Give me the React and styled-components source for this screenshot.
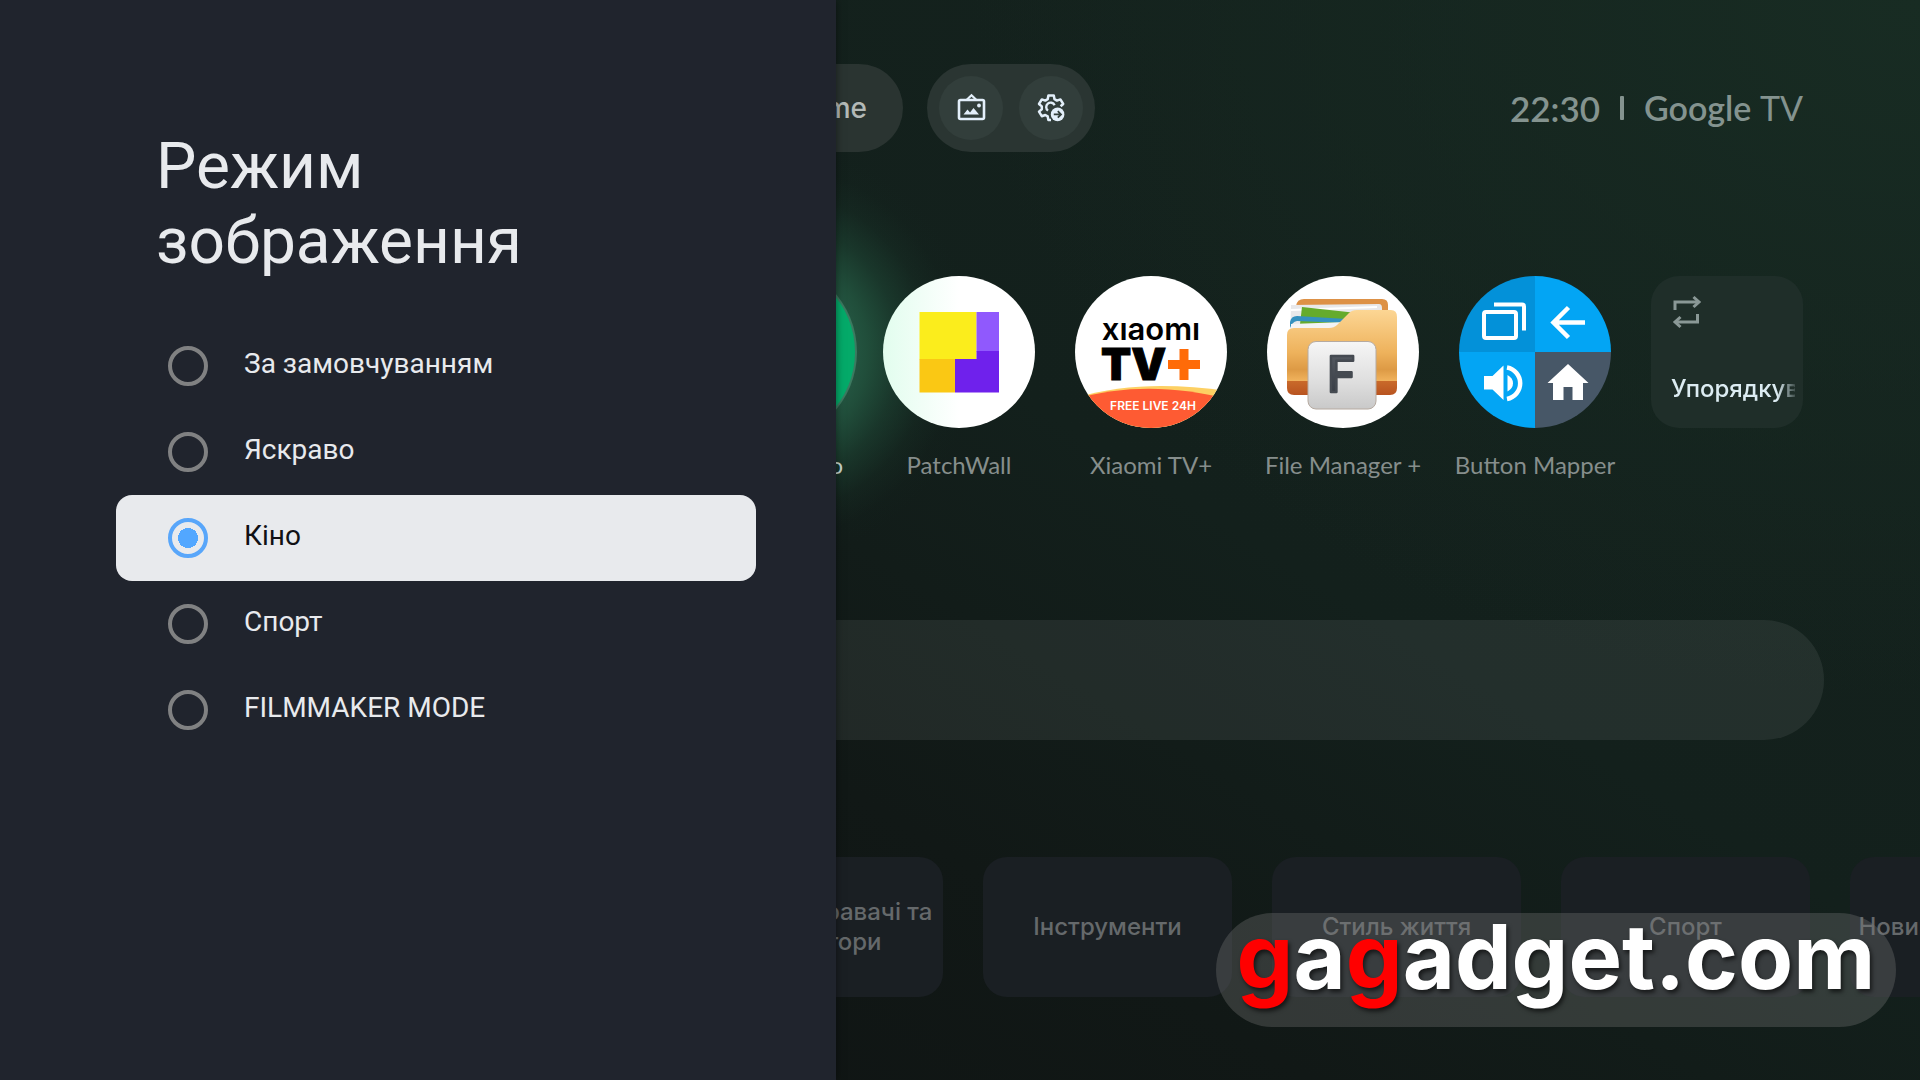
import React, { useState } from "react";
import styled, { createGlobalStyle, css } from "styled-components";

const GlobalStyle = createGlobalStyle`
  *, *::before, *::after { box-sizing: border-box; }
  body { margin: 0; background: #111716; }
`;

const uiFont = `"Inter", "Liberation Sans", sans-serif`;
const labelFont = `"Lato", "Liberation Sans", sans-serif`;

const Screen = styled.div`
  position: relative;
  min-height: 100vh;
  display: grid;
  overflow: hidden;
  font-family: ${uiFont};
  background:
    radial-gradient(ellipse 950px 700px at 100% 0%, #182c23 0%, rgba(23, 42, 34, 0.7) 40%, rgba(20, 33, 28, 0) 100%),
    linear-gradient(212deg, #15231e 0%, #13201c 42%, #111816 64%, #0e1111 100%);
`;

/* ---------- Settings side panel ---------- */

const Panel = styled.aside`
  position: absolute;
  z-index: 2;
  top: 0;
  bottom: 0;
  left: 0;
  width: 836px;
  padding: 129px 80px 0 116px;
  background: #20242d;
  box-shadow: 0 0 8px rgba(0, 0, 0, 0.5);
  font-family: "Roboto", "Liberation Sans", sans-serif;
`;

const Title = styled.h1`
  margin: 0 0 44px;
  padding-left: 40px;
  max-width: 480px;
  font-size: 64px;
  line-height: 75px;
  font-weight: 400;
  color: #e8eaed;
`;

const Options = styled.fieldset`
  margin: 0;
  padding: 0;
  border: 0;
  display: flex;
  flex-direction: column;
`;

const Option = styled.label`
  display: flex;
  align-items: center;
  gap: 36px;
  height: 86px;
  padding: 0 52px;
  border-radius: 16px;
  color: #e8eaed;
  cursor: pointer;
  ${(p) => p.$active && css`
    background: #e8eaed;
    color: #101114;
  `}
`;

const Radio = styled.input`
  appearance: none;
  flex: none;
  width: 40px;
  height: 40px;
  margin: 0;
  border: 4px solid #808182;
  border-radius: 50%;
  outline: none;
  &:checked {
    border-color: #58a6fa;
    background: radial-gradient(circle, #52a7ff 0 10px, transparent 10px);
  }
`;

const OptionText = styled.span`
  padding-bottom: 5px;
  font-size: 28px;
  line-height: 33px;
`;

/* ---------- Home screen ---------- */

const Home = styled.main`
  display: flex;
  flex-direction: column;
  min-width: 0;
  padding: 64px 0 83px;
`;

const Header = styled.header`
  display: flex;
  align-items: center;
  gap: 24px;
  padding: 0 117px 0 96px;
`;

const NavPill = styled.nav`
  display: flex;
  align-items: center;
  justify-content: flex-end;
  width: 807px;
  height: 88px;
  padding: 0 36px;
  border-radius: 44px;
  background: #2a3431;
`;

const NavLink = styled.a`
  color: #b3b9b7;
  font-family: ${uiFont};
  font-size: 28px;
  line-height: 36px;
  font-weight: 500;
  text-decoration: none;
`;

const ToolPill = styled.div`
  display: flex;
  gap: 16px;
  padding: 12px;
  border-radius: 44px;
  background: #2a3532;
`;

const RoundButton = styled.button`
  display: grid;
  place-items: center;
  width: 64px;
  height: 64px;
  padding: 0;
  border: 0;
  border-radius: 50%;
  background: #323e3b;
  color: #e3effa;
`;

const Status = styled.div`
  display: flex;
  align-items: center;
  gap: 20px;
  margin-left: auto;
  color: #84938f;
  font-family: ${labelFont};
`;

const Clock = styled.time`
  font-size: 35px;
  line-height: 44px;
  font-weight: 600;
`;

const Divider = styled.span`
  width: 4px;
  height: 24px;
  border-radius: 1px;
  background: #84938f;
`;

const Brand = styled.span`
  font-size: 34px;
  line-height: 44px;
  font-weight: 600;
`;

const BrandLight = styled.span`
  font-weight: 400;
`;

const Apps = styled.ul`
  list-style: none;
  display: flex;
  justify-content: flex-end;
  gap: 40px;
  margin: 124px 0 0;
  padding: 0 117px;
`;

const AppItem = styled.li`
  position: relative;
  flex: none;
  width: 152px;
`;

const AppLink = styled.a`
  position: relative;
  display: flex;
  flex-direction: column;
  align-items: center;
  gap: 23px;
  color: ${(p) => (p.$focused ? "#c8d6d0" : "#868e8c")};
  text-decoration: none;
  svg { display: block; }
`;

const AppName = styled.span`
  font-family: ${labelFont};
  font-size: 24px;
  line-height: 28px;
  white-space: nowrap;
`;

const FocusName = styled(AppName)`
  align-self: flex-end;
`;

const FocusGlow = styled.span`
  position: absolute;
  top: -134px;
  left: -134px;
  width: 420px;
  height: 420px;
  border-radius: 50%;
  background: radial-gradient(circle closest-side, #265d46 0%, #255944 38%, rgba(35, 86, 64, 0.85) 48%, rgba(32, 78, 58, 0.5) 63%, rgba(28, 66, 49, 0.2) 78%, rgba(20, 50, 38, 0.05) 90%, rgba(20, 50, 38, 0) 100%);
  pointer-events: none;
`;

const FocusDisc = styled.span`
  width: 152px;
  height: 152px;
  border-radius: 50%;
  background: #04aa69;
  box-shadow: 0 0 0 12px #04aa69, 0 0 0 14px #3c7a60;
`;

const ReorderCard = styled.button`
  flex: none;
  display: flex;
  flex-direction: column;
  justify-content: space-between;
  align-items: flex-start;
  width: 152px;
  height: 152px;
  padding: 18px 8px 23px 20px;
  border: 0;
  border-radius: 28px;
  background: #1f2e29;
  color: #dcecf2;
  overflow: hidden;
`;

const ReorderText = styled.span`
  width: 124px;
  overflow: hidden;
  font-family: ${uiFont};
  font-size: 24px;
  line-height: 32px;
  font-weight: 500;
  text-align: left;
  white-space: nowrap;
  mask-image: linear-gradient(90deg, #000 106px, transparent 128px);
`;

const Banner = styled.div`
  height: 120px;
  margin: 141px 96px 0;
  border-radius: 60px;
  background: rgba(255, 255, 255, 0.07);
`;

const Categories = styled.div`
  display: grid;
  grid-auto-flow: column;
  grid-auto-columns: 249px;
  grid-template-rows: 140px;
  gap: 40px;
  margin-top: 117px;
  padding-left: 116px;
  overflow: hidden;
`;

const Category = styled.button`
  grid-row: 1;
  grid-column: ${(p) => p.$column};
  padding: 0;
  border: 0;
  border-radius: 24px;
  background: #1a1f23;
  color: #65696b;
  font-family: ${uiFont};
  font-size: 24px;
  line-height: 30px;
  font-weight: 500;
`;

const Watermark = styled.div`
  position: absolute;
  z-index: 3;
  right: 24px;
  bottom: 53px;
  width: 680px;
  height: 114px;
  display: flex;
  justify-content: center;
  border-radius: 57px;
  background: rgba(124, 124, 124, 0.32);
  color: #fff;
  font-family: ${uiFont};
  font-size: 90px;
  line-height: 88px;
  font-weight: 700;
  text-shadow: 2px 3px 4px rgba(0, 0, 0, 0.6);
`;

const Red = styled.span`
  color: #ff0000;
`;

/* ---------- Icons ---------- */

const PictureIcon = () => (
  <svg width="32" height="32" viewBox="0 0 32 32" fill="none" stroke="currentColor" aria-hidden="true">
    <rect x="4" y="8" width="25" height="19" rx="1.5" strokeWidth="2.6" />
    <path d="M11.5 8 L16.5 3.2 L21.5 8" strokeWidth="2.2" />
    <circle cx="24" cy="13.5" r="1.9" fill="currentColor" stroke="none" />
    <path d="M8.500 22.500 L12.500 17.500 L15 20.500 L18.500 16 L24 22.500 Z" fill="currentColor" stroke="none" />
  </svg>
);

const SettingsIcon = () => (
  <svg width="32" height="32" viewBox="0 0 32 32" fill="none" aria-hidden="true">
    <path
      d="M16 28 L13.4 28 L12.7 24.4 L10.3 23 L6.8 24.2 L4 19.6 L6.8 17.2 L6.8 14.4 L4 12 L6.8 7.4 L10.3 8.6 L12.7 7.2 L13.4 3.6 L18.8 3.6 L19.5 7.2 L21.9 8.6 L25.4 7.4 L28.2 12 L25.6 14.3"
      stroke="currentColor" strokeWidth="2.5" strokeLinejoin="round" />
    <path d="M13 18.6 A4.4 4.4 0 1 1 19.6 13.2" stroke="currentColor" strokeWidth="2.4" />
    <circle cx="22.6" cy="22.4" r="6.8" fill="currentColor" />
    <path d="M18.8 22.4 H25.6 M22.8 19.2 L26 22.4 L22.8 25.6" stroke="#323e3b" strokeWidth="1.8" />
  </svg>
);

const ReorderIcon = () => (
  <svg width="32" height="36" viewBox="0 0 32 36" fill="none" stroke="#8a9896" strokeWidth="3" aria-hidden="true">
    <path d="M4 16 V8 H27" />
    <path d="M22.5 3 L28 8 L22.5 13" />
    <path d="M26.5 20 V28 H4" />
    <path d="M9.5 23 L4 28 L9.5 33" />
  </svg>
);

const PatchWallIcon = () => (
  <svg width="152" height="152" viewBox="0 0 152 152" aria-hidden="true">
    <defs>
      <linearGradient id="pw-tint" x1="0" y1="0" x2="1" y2="0">
        <stop offset="0" stopColor="#e2fdee" />
        <stop offset="0.5" stopColor="#fff" />
      </linearGradient>
    </defs>
    <circle cx="76" cy="76" r="76" fill="url(#pw-tint)" />
    <rect x="36.500" y="36" width="57" height="47.500" fill="#fbed1c" />
    <rect x="93.500" y="36" width="22.500" height="39.500" fill="#9059fd" />
    <path d="M93.500 75 H116 V116.500 H72 V83 H93.500 Z" fill="#6f21ec" />
    <rect x="36.500" y="83" width="35.500" height="33.500" fill="#fac814" />
  </svg>
);

const XiaomiIcon = () => (
  <svg width="152" height="152" viewBox="0 0 152 152" aria-hidden="true">
    <defs>
      <clipPath id="xiaomi-disc"><circle cx="76" cy="76" r="76" /></clipPath>
    </defs>
    <g clipPath="url(#xiaomi-disc)">
      <rect width="152" height="152" fill="#fff" />
      <path d="M0 122 C50 107 100 108 152 115 V152 H0 Z" fill="#fdd063" />
      <path d="M0 123 C50 109 100 110 152 123 V152 H0 Z" fill="#fe5b33" />
      <path d="M104.500 73 h9 v11 h11.500 v9 h-11.500 v11 h-9 v-11 h-11.500 v-9 h11.500 Z" fill="#ff6b08" />
      <text x="76" y="64" textAnchor="middle" fontFamily="Inter" fontSize="31" fontWeight="600">xıaomı</text>
      <text x="26" y="104" fontFamily="Inter" fontSize="44" fontWeight="900" stroke="#000" strokeWidth="1">TV</text>
      <text x="78" y="134" textAnchor="middle" fontFamily="Inter" fontSize="12" fontWeight="600" fill="#fff">FREE LIVE 24H</text>
    </g>
  </svg>
);

const FileManagerIcon = () => (
  <svg width="152" height="152" viewBox="0 0 152 152" aria-hidden="true">
    <defs>
      <linearGradient id="fm-front" x1="0" y1="0" x2="0" y2="1">
        <stop offset="0" stopColor="#fcd694" />
        <stop offset="0.5" stopColor="#eeb25c" />
        <stop offset="0.7" stopColor="#dd9a45" />
        <stop offset="0.83" stopColor="#f0b25c" />
        <stop offset="0.84" stopColor="#c9692a" />
        <stop offset="1" stopColor="#b85420" />
      </linearGradient>
      <linearGradient id="fm-badge" x1="0" y1="0" x2="0" y2="1">
        <stop offset="0" stopColor="#f6f6f6" />
        <stop offset="0.6" stopColor="#dedede" />
        <stop offset="1" stopColor="#c9c9c9" />
      </linearGradient>
      <linearGradient id="fm-letter" x1="0" y1="0" x2="0" y2="1">
        <stop offset="0" stopColor="#5b6067" />
        <stop offset="1" stopColor="#30353d" />
      </linearGradient>
    </defs>
    <circle cx="76" cy="76" r="76" fill="#fff" />
    <path d="M29 30 Q30 23 37 23 H115 Q121 23 121 29 V60 H29 Z" fill="#dd9146" />
    <path d="M24 29 L112 28 Q115 28 115 32 V70 H23 Z" fill="#e8e8ea" />
    <path d="M24 34 L110 31" stroke="#fff" strokeWidth="2" />
    <path d="M35 31 L90 37 L80 48 H33 Z" fill="#65ab2c" />
    <path d="M23 46 Q24 40 30 40 L80 43 V47 L30 45 Q25 46 23 52 Z" fill="#3591bf" />
    <path d="M24 48 L78 46 V54 L24 54 Z" fill="#f3f3f5" />
    <path d="M20 59 Q20 52 27 52 H62 Q67 52 70 49 L82 37 Q85 34 90 34 H124 Q130 34 130 41 V112 Q130 119 123 119 H27 Q20 119 20 112 Z" fill="url(#fm-front)" />
    <rect x="41" y="65.500" width="68" height="67.500" rx="8" fill="url(#fm-badge)" stroke="#b6aaa0" strokeWidth="1" />
    <text x="60" y="116" fontFamily="Inter" fontSize="49" fontWeight="500" fill="url(#fm-letter)" stroke="#454a51" strokeWidth="2.500" strokeLinejoin="round">F</text>
  </svg>
);

const ButtonMapperIcon = () => (
  <svg width="152" height="152" viewBox="0 0 152 152" aria-hidden="true">
    <path d="M76 76 V0 A76 76 0 0 0 0 76 Z" fill="#0391d9" />
    <path d="M76 76 H152 A76 76 0 0 0 76 0 Z" fill="#03a5f4" />
    <path d="M76 76 H0 A76 76 0 0 0 76 152 Z" fill="#03a5f4" />
    <path d="M76 76 V152 A76 76 0 0 0 152 76 Z" fill="#475767" />
    <g fill="none" stroke="#fff" strokeWidth="4">
      <rect x="25" y="36" width="32" height="26" rx="2" />
      <path d="M35 28.500 H63 Q65 28.500 65 30.500 V54.500" />
      <path d="M126 46.500 H95 M109.500 31.500 L94.500 46.500 L109.500 61.500" strokeWidth="4.500" />
      <path d="M48 91.500 A16 16 0 0 1 48 123" strokeWidth="4.500" />
    </g>
    <path d="M25 100 H33.500 L44.500 89.500 V124 L33.500 113.500 H25 Z" fill="#fff" />
    <path d="M48.500 99 Q54 102 54 107.300 Q54 112.500 48.500 115.500 Z" fill="#fff" />
    <path d="M109 88 L129.500 107 H124 V124 H113.500 V111 H104.500 V124 H94 V107 H88.500 Z" fill="#fff" />
  </svg>
);

const apps = [
  { name: "PatchWall", Icon: PatchWallIcon },
  { name: "Xiaomi TV+", Icon: XiaomiIcon },
  { name: "File Manager +", Icon: FileManagerIcon },
  { name: "Button Mapper", Icon: ButtonMapperIcon },
];

const modes = ["За замовчуванням", "Яскраво", "Кіно", "Спорт", "FILMMAKER MODE"];

const firstCategoryColumn = 3;
const categories = [
  "Відеопрогравачі та редактори",
  "Інструменти",
  "Стиль життя",
  "Спорт",
  "Новини та журнали",
];

export default function App() {
  const [mode, setMode] = useState("Кіно");
  return (
    <Screen>
      <GlobalStyle />
      <Home>
        <Header>
          <NavPill>
            <NavLink href="#home">Home</NavLink>
          </NavPill>
          <ToolPill>
            <RoundButton type="button" aria-label="Ambient"><PictureIcon /></RoundButton>
            <RoundButton type="button" aria-label="Settings"><SettingsIcon /></RoundButton>
          </ToolPill>
          <Status>
            <Clock>22:30</Clock>
            <Divider />
            <Brand>Google <BrandLight>TV</BrandLight></Brand>
          </Status>
        </Header>

        <Apps>
          <AppItem>
            <FocusGlow />
            <AppLink href="#focused" $focused>
              <FocusDisc />
              <FocusName>o</FocusName>
            </AppLink>
          </AppItem>
          {apps.map(({ name, Icon }) => (
            <AppItem key={name}>
              <AppLink href="#app">
                <Icon />
                <AppName>{name}</AppName>
              </AppLink>
            </AppItem>
          ))}
          <ReorderCard type="button">
            <ReorderIcon />
            <ReorderText>Упорядкувати</ReorderText>
          </ReorderCard>
        </Apps>

        <Banner />

        <Categories>
          {categories.map((c, i) => (
            <Category key={c} type="button" $column={firstCategoryColumn + i}>{c}</Category>
          ))}
        </Categories>
      </Home>

      <Panel>
        <Title>Режим зображення</Title>
        <Options>
          {modes.map((m) => (
            <Option key={m} $active={m === mode}>
              <Radio type="radio" name="mode" checked={m === mode} onChange={() => setMode(m)} />
              <OptionText>{m}</OptionText>
            </Option>
          ))}
        </Options>
      </Panel>

      <Watermark>
        <span><Red>g</Red>a<Red>g</Red>adget.com</span>
      </Watermark>
    </Screen>
  );
}
